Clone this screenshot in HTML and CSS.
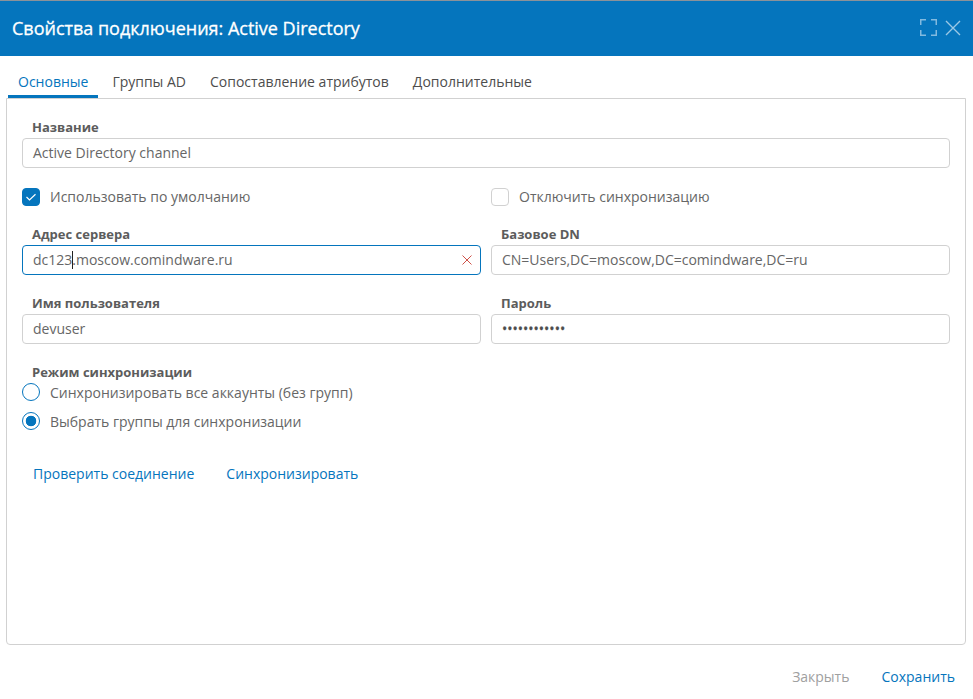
FILE: index.html
```html
<!DOCTYPE html>
<html lang="ru">
<head>
<meta charset="utf-8">
<title>Свойства подключения</title>
<link rel="stylesheet" href="styles.css">
</head>
<body>
<div class="dialog">
  <header class="header">
    <h1 class="title">Свойства подключения: Active Directory</h1>
    <svg class="expand" width="17" height="17" viewBox="0 0 17 17"><path d="M.75 6V.75H6M11 .75h5.25V6M.75 11v5.25H6M11 16.25h5.25V11"/></svg>
    <svg class="close" width="16" height="16" viewBox="0 0 16 16"><path d="M1 1l14 14M15 1L1 15"/></svg>
  </header>
  <nav class="tabs">
    <a class="tab active">Основные</a>
    <a class="tab">Группы AD</a>
    <a class="tab">Сопоставление атрибутов</a>
    <a class="tab">Дополнительные</a>
  </nav>
  <main class="panel">
    <div class="field">
      <div class="label">Название</div>
      <div class="input">Active Directory channel</div>
    </div>
    <div class="columns checks">
      <div class="option"><span class="checkbox checked"><svg width="18" height="18" viewBox="0 0 18 18"><path d="M4.5 9l3 3 6-5.7"/></svg></span><span>Использовать по умолчанию</span></div>
      <div class="option"><span class="checkbox"></span><span>Отключить синхронизацию</span></div>
    </div>
    <div class="columns">
      <div class="field">
        <div class="label">Адрес сервера</div>
        <div class="input focused"><span>dc123<i class="caret"></i>.moscow.comindware.ru</span><svg class="clear" width="10" height="10" viewBox="0 0 10 10"><path d="M.5 .5l9 9M9.5 .5l-9 9"/></svg></div>
      </div>
      <div class="field">
        <div class="label">Базовое DN</div>
        <div class="input">CN=Users,DC=moscow,DC=comindware,DC=ru</div>
      </div>
    </div>
    <div class="columns second">
      <div class="field">
        <div class="label">Имя пользователя</div>
        <div class="input">devuser</div>
      </div>
      <div class="field">
        <div class="label">Пароль</div>
        <div class="input password">••••••••••••</div>
      </div>
    </div>
    <div class="mode">
      <div class="label">Режим синхронизации</div>
      <div class="option"><span class="radio"></span><span>Синхронизировать все аккаунты (без групп)</span></div>
      <div class="option"><span class="radio selected"></span><span>Выбрать группы для синхронизации</span></div>
    </div>
    <div class="actions"><a>Проверить соединение</a><a>Синхронизировать</a></div>
  </main>
  <footer class="footer"><a class="muted">Закрыть</a><a>Сохранить</a></footer>
</div>
</body>
</html>
```
FILE: styles.css
```css
* { box-sizing: border-box; }
body {
  margin: 0;
  font-family: "Open Sans", sans-serif;
  font-size: 14px;
  line-height: 20px;
  color: #666;
  background: #fff;
}
svg { fill: none; flex: none; }
.dialog { height: 699px; display: flex; flex-direction: column; white-space: nowrap; overflow: hidden; }
.header {
  height: 56px;
  border-top: 1px solid #8c9299;
  background: #0575bd;
  display: flex;
  align-items: center;
  padding: 0 12px 2px;
}
.title {
  margin: 0;
  flex: 1;
  font-size: 18px;
  font-weight: 500;
  letter-spacing: -.01px;
  color: #fff;
  -webkit-text-stroke: .3px #fff;
}
.expand { stroke: #82badf; stroke-width: 1.5; margin-right: 8px; }
.close { stroke: #9bc8e5; stroke-width: 1.4; }
.tabs { height: 42px; padding-left: 8px; display: flex; gap: 4px; color: #4d4d4d; }
.tab { padding: 16px 10px 0; border-bottom: 3px solid transparent; }
.active { color: #0575bd; border-color: #0575bd; }
.panel {
  height: 547px;
  margin: 0 7px 0 6px;
  border: 1px solid #d1d1d1;
  border-radius: 0 0 4px 4px;
  padding: 19px 15px 0;
}
.label { height: 20px; padding-left: 10px; font-size: 13px; line-height: 18px; font-weight: 700; color: #5c5c5c; }
.input {
  height: 30px;
  border: 1px solid #d1d1d1;
  border-radius: 4px;
  padding: 0 10px;
  display: flex;
  align-items: center;
  justify-content: space-between;
}
.focused { border-color: #0575bd; padding-right: 8px; }
.password { color: #4d4d4d; -webkit-text-stroke: .3px #4d4d4d; }
.caret { display: inline-block; width: 1px; height: 18px; margin-right: -1px; vertical-align: -4px; background: #222; }
.clear { stroke: #cf5148; stroke-width: 1; }
.columns { display: grid; grid-template-columns: 1fr 1fr; gap: 10px; }
.checks { margin: 19px 0 18px; }
.option { display: flex; align-items: center; gap: 10px; height: 20px; }
.checkbox { width: 18px; height: 18px; border: 1px solid #d1d1d1; border-radius: 4px; }
.checkbox svg { display: block; margin: -1px; stroke: #fff; stroke-width: 1.2; }
.checked { background: #0575bd; border-color: #0575bd; }
.second { margin-top: 19px; }
.mode { margin-top: 19px; }
.mode .option + .option { margin-top: 9px; }
.radio { width: 18px; height: 18px; margin-bottom: 2px; border: 1px solid #0575bd; border-radius: 50%; }
.selected { background: radial-gradient(circle, #0575bd 5px, transparent 5.6px); }
.actions { margin-top: 32px; padding-left: 11px; display: flex; gap: 32px; color: #0575bd; }
.footer { margin-top: 22px; padding-right: 18px; display: flex; justify-content: flex-end; gap: 32px; color: #0575bd; }
.muted { color: #a0a0a0; }
```
